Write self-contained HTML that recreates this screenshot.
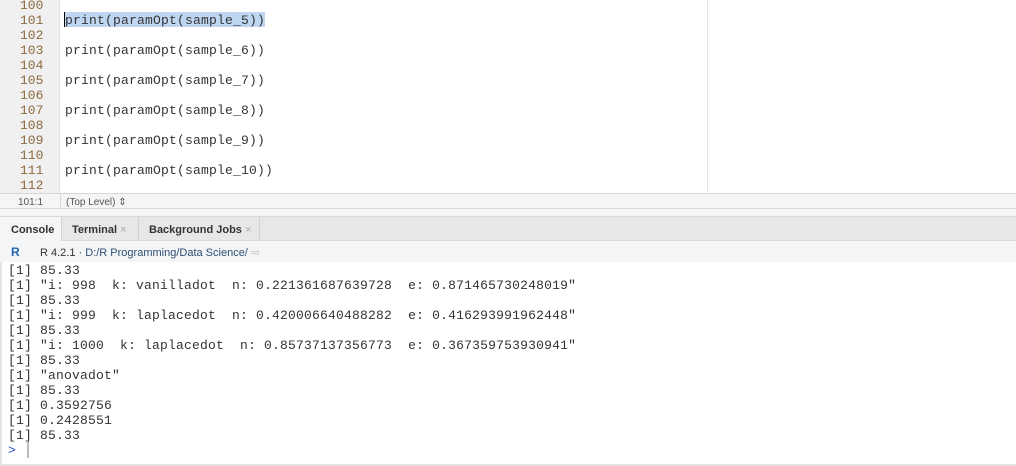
<!DOCTYPE html>
<html><head><style>
*{margin:0;padding:0;box-sizing:border-box}
body{width:1016px;height:466px;overflow:hidden;background:#fff;font-family:"Liberation Sans",sans-serif;position:relative}
.mono{font-family:"Liberation Mono",monospace;font-size:13px;line-height:15px}
#gut{position:absolute;left:0;top:0;width:60px;height:193px;background:#f0f0f0;border-right:1px solid #e4e4e4}
.ln{position:absolute;left:20px;color:#8d6a3f;white-space:pre}
.code{position:absolute;left:65px;color:#333;white-space:pre;letter-spacing:0.2px}
#margin{position:absolute;left:707px;top:0;width:1px;height:193px;background:#e8e8e8}
#status{position:absolute;left:0;top:193px;width:1016px;height:16px;background:#f3f5f6;border-top:1px solid #d6d8da;border-bottom:1px solid #d6d8da;font-size:10px;color:#555}
#gap{position:absolute;left:0;top:209px;width:1016px;height:8px;background:#f3f5f6;border-bottom:1px solid #d6d8da}
#tabs{position:absolute;left:0;top:217px;width:1016px;height:24px;background:#e6e7e8;border-bottom:1px solid #d6d8da}
.tab{position:absolute;top:0;height:23px;font-size:11px;font-weight:bold;color:#333;padding-top:7px;border-right:1px solid #d0d2d4}
#path{position:absolute;left:0;top:241px;width:1016px;height:21px;background:#f3f5f6;font-size:11px;color:#333}
#con{position:absolute;left:0;top:262px;width:1016px;height:204px;border-bottom:2px solid #e4e4e4;border-left:2px solid #e4e4e4}
.cl{position:absolute;left:6px;color:#333;white-space:pre;letter-spacing:0.2px}
</style></head><body>
<div id="gut"></div>
<div id="margin"></div>
<div class="mono">
<div class="ln" style="top:-2px">100</div>
<div class="ln" style="top:13px">101</div>
<div class="ln" style="top:28px">102</div>
<div class="ln" style="top:43px">103</div>
<div class="ln" style="top:58px">104</div>
<div class="ln" style="top:73px">105</div>
<div class="ln" style="top:88px">106</div>
<div class="ln" style="top:103px">107</div>
<div class="ln" style="top:118px">108</div>
<div class="ln" style="top:133px">109</div>
<div class="ln" style="top:148px">110</div>
<div class="ln" style="top:163px">111</div>
<div class="ln" style="top:178px">112</div>
<div style="position:absolute;left:64px;top:12px;width:201px;height:15px;background:#bfd6f2"></div>
<div style="position:absolute;left:64px;top:12px;width:1px;height:15px;background:#000"></div>
<div class="code" style="top:13px">print(paramOpt(sample_5))</div>
<div class="code" style="top:43px">print(paramOpt(sample_6))</div>
<div class="code" style="top:73px">print(paramOpt(sample_7))</div>
<div class="code" style="top:103px">print(paramOpt(sample_8))</div>
<div class="code" style="top:133px">print(paramOpt(sample_9))</div>
<div class="code" style="top:163px">print(paramOpt(sample_10))</div>
</div>
<div id="status"><span style="position:absolute;left:18px;top:3px">101:1</span><span style="position:absolute;left:60px;top:0;width:1px;height:14px;background:#d6d8da"></span><span style="position:absolute;left:66px;top:3px">(Top Level) ⇕</span></div>
<div id="gap"></div>
<div id="tabs">
<div class="tab" style="left:0;width:62px;background:#f3f5f6;height:24px;padding-left:11px">Console</div>
<div class="tab" style="left:62px;width:77px;padding-left:10px">Terminal <span style="color:#aaa;font-weight:normal">×</span></div>
<div class="tab" style="left:139px;width:121px;padding-left:10px">Background Jobs <span style="color:#aaa;font-weight:normal">×</span></div>
</div>
<div id="path"><span style="position:absolute;left:11px;top:4px;font-weight:bold;color:#2165b5;font-size:12px">R</span><span style="position:absolute;left:40px;top:5px">R 4.2.1 · <span style="color:#2e4f73">D:/R Programming/Data Science/</span> <span style="color:#bbb">⇨</span></span></div>
<div id="con" class="mono">
<div class="cl" style="top:1px">[1] 85.33</div>
<div class="cl" style="top:16px">[1] "i: 998  k: vanilladot  n: 0.221361687639728  e: 0.871465730248019"</div>
<div class="cl" style="top:31px">[1] 85.33</div>
<div class="cl" style="top:46px">[1] "i: 999  k: laplacedot  n: 0.420006640488282  e: 0.416293991962448"</div>
<div class="cl" style="top:61px">[1] 85.33</div>
<div class="cl" style="top:76px">[1] "i: 1000  k: laplacedot  n: 0.85737137356773  e: 0.367359753930941"</div>
<div class="cl" style="top:91px">[1] 85.33</div>
<div class="cl" style="top:106px">[1] "anovadot"</div>
<div class="cl" style="top:121px">[1] 85.33</div>
<div class="cl" style="top:136px">[1] 0.3592756</div>
<div class="cl" style="top:151px">[1] 0.2428551</div>
<div class="cl" style="top:166px">[1] 85.33</div>
<div class="cl" style="top:181px;color:#2b4fd6">&gt;</div>
<div style="position:absolute;left:25px;top:180px;width:2px;height:16px;background:#bbb"></div>
</div>
</body></html>
